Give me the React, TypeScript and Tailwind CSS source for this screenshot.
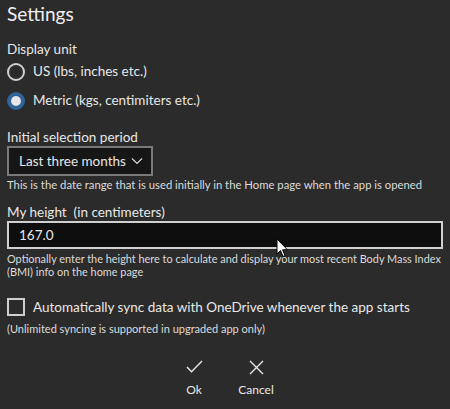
import React from "react";

const font = { fontFamily: "Lato, 'Noto Sans', sans-serif" };

function Radio({ checked, label }: { checked?: boolean; label: string }) {
  return (
    <div className="flex items-center h-[29px]">
      {checked ? (
        <span className="w-[18px] h-[18px] rounded-full border-[4px] border-[#2f6399] bg-[#e6e6e6] shrink-0" />
      ) : (
        <span className="w-[18px] h-[18px] rounded-full border-2 border-[#cfcfcf] shrink-0" />
      )}
      <span className="ml-[8px] text-[13.5px] text-[#e8e8e8] whitespace-nowrap">{label}</span>
    </div>
  );
}

export default function App() {
  return (
    <div
      className="relative w-[450px] h-[409px] bg-[#2b2b2b] text-[#e8e8e8] px-[7px] overflow-hidden"
      style={font}
    >
      <h1 className="text-[19px] leading-[26px] pt-[1px] text-[#f0f0f0]">Settings</h1>

      <p className="mt-[12px] text-[13.5px] leading-[20px]">Display unit</p>
      <div className="mt-[-2px]">
        <Radio label="US (lbs, inches etc.)" />
        <Radio checked label="Metric (kgs, centimiters etc.)" />
      </div>

      <p className="mt-[13px] text-[13.5px] leading-[18px]">Initial selection period</p>
      <button className="flex items-center h-[30px] w-[146px] border-2 border-[#7a7a7a] bg-[#161616] pl-[10px] pr-[8px] text-[13.5px] whitespace-nowrap">
        <span>Last three months</span>
        <svg className="ml-auto" width="12" height="8" viewBox="0 0 12 8" fill="none">
          <path d="M1 1.5 L6 6.5 L11 1.5" stroke="#d8d8d8" strokeWidth="1.2" />
        </svg>
      </button>
      <p className="mt-[2px] text-[11.3px] leading-[14px] text-[#dcdcdc] whitespace-nowrap">
        This is the date range that is used initially in the Home page when the app is opened
      </p>

      <p className="mt-[11px] text-[13.5px] leading-[18px] whitespace-pre">My height  (in centimeters)</p>
      <div className="flex items-center h-[28px] w-full border-2 border-[#d0d0d0] bg-[#0e0e0e] pl-[10px] text-[13.5px]">
        167.0
      </div>
      <p className="mt-[3px] text-[10.9px] leading-[13px] text-[#dcdcdc] whitespace-nowrap">
        Optionally enter the height here to calculate and display your most recent Body Mass Index
        <br />
        (BMI) info on the home page
      </p>

      <div className="mt-[20px] flex items-center">
        <span className="w-[18px] h-[18px] border-2 border-[#cfcfcf] shrink-0" />
        <span className="ml-[8px] text-[13.5px] leading-[18px] whitespace-nowrap">
          Automatically sync data with OneDrive whenever the app starts
        </span>
      </div>
      <p className="mt-[6px] text-[11px] leading-[14px] text-[#dcdcdc] whitespace-nowrap">
        (Unlimited syncing is supported in upgraded app only)
      </p>

      <div className="mt-[24px] flex justify-center gap-[22px]">
        <button className="flex flex-col items-center w-[40px]">
          <svg width="17" height="13" viewBox="0 0 17 13" fill="none">
            <path d="M1 7 L5.5 11.8 L16 1" stroke="#e8e8e8" strokeWidth="1.4" />
          </svg>
          <span className="mt-[11px] text-[12px] leading-[12px]">Ok</span>
        </button>
        <button className="flex flex-col items-center w-[40px]">
          <svg width="15" height="15" viewBox="0 0 15 15" fill="none">
            <path d="M1 1 L14 14 M14 1 L1 14" stroke="#e8e8e8" strokeWidth="1.4" />
          </svg>
          <span className="mt-[9px] text-[12px] leading-[12px]">Cancel</span>
        </button>
      </div>

      {/* mouse pointer */}
      <svg className="absolute left-[276px] top-[238px]" width="13" height="20" viewBox="0 0 13 20">
        <path d="M1 1 L1 16 L4.5 12.5 L7 18.5 L9 17.6 L6.6 11.8 L11.5 11.8 Z" fill="#ffffff" stroke="#000000" strokeWidth="1" />
      </svg>
    </div>
  );
}
